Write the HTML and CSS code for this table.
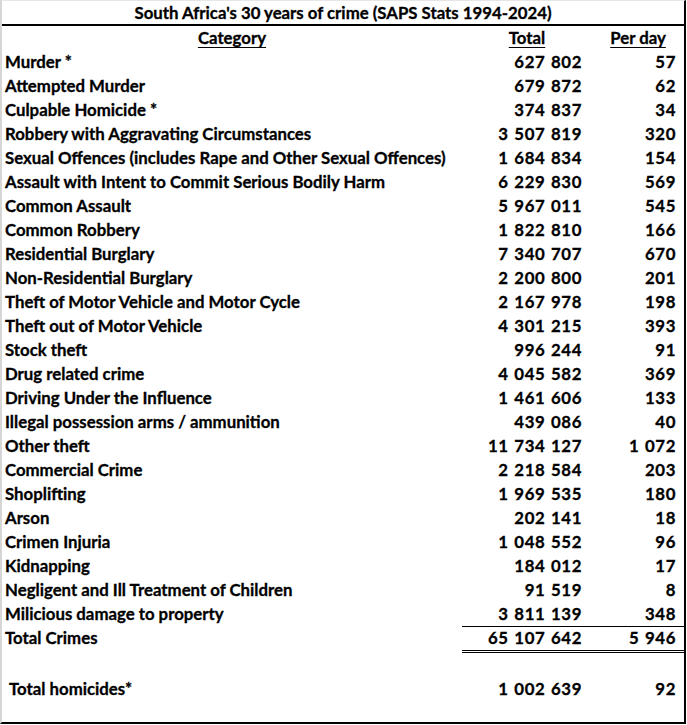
FILE: index.html
```html
<!DOCTYPE html>
<html>
<head>
<meta charset="utf-8">
<link rel="stylesheet" href="styles.css">
</head>
<body>
<div class="sheet">
  <div class="title">South Africa's 30 years of crime (SAPS Stats 1994-2024)</div>
  <div class="row head">
    <div class="cat"><u>Category</u></div>
    <div class="tot"><u>Total</u></div>
    <div class="pd"><u>Per day</u></div>
  </div>
  <div class="row"><div class="cat">Murder *</div><div class="tot">627 802</div><div class="pd">57</div></div>
  <div class="row"><div class="cat">Attempted Murder</div><div class="tot">679 872</div><div class="pd">62</div></div>
  <div class="row"><div class="cat">Culpable Homicide *</div><div class="tot">374 837</div><div class="pd">34</div></div>
  <div class="row"><div class="cat">Robbery with Aggravating Circumstances</div><div class="tot">3 507 819</div><div class="pd">320</div></div>
  <div class="row"><div class="cat">Sexual Offences (includes Rape and Other Sexual Offences)</div><div class="tot">1 684 834</div><div class="pd">154</div></div>
  <div class="row"><div class="cat">Assault with Intent to Commit Serious Bodily Harm</div><div class="tot">6 229 830</div><div class="pd">569</div></div>
  <div class="row"><div class="cat">Common Assault</div><div class="tot">5 967 011</div><div class="pd">545</div></div>
  <div class="row"><div class="cat">Common Robbery</div><div class="tot">1 822 810</div><div class="pd">166</div></div>
  <div class="row"><div class="cat">Residential Burglary</div><div class="tot">7 340 707</div><div class="pd">670</div></div>
  <div class="row"><div class="cat">Non-Residential Burglary</div><div class="tot">2 200 800</div><div class="pd">201</div></div>
  <div class="row"><div class="cat">Theft of Motor Vehicle and Motor Cycle</div><div class="tot">2 167 978</div><div class="pd">198</div></div>
  <div class="row"><div class="cat">Theft out of Motor Vehicle</div><div class="tot">4 301 215</div><div class="pd">393</div></div>
  <div class="row"><div class="cat">Stock theft</div><div class="tot">996 244</div><div class="pd">91</div></div>
  <div class="row"><div class="cat">Drug related crime</div><div class="tot">4 045 582</div><div class="pd">369</div></div>
  <div class="row"><div class="cat">Driving Under the Influence</div><div class="tot">1 461 606</div><div class="pd">133</div></div>
  <div class="row"><div class="cat">Illegal possession arms / ammunition</div><div class="tot">439 086</div><div class="pd">40</div></div>
  <div class="row"><div class="cat">Other theft</div><div class="tot">11 734 127</div><div class="pd">1 072</div></div>
  <div class="row"><div class="cat">Commercial Crime</div><div class="tot">2 218 584</div><div class="pd">203</div></div>
  <div class="row"><div class="cat">Shoplifting</div><div class="tot">1 969 535</div><div class="pd">180</div></div>
  <div class="row"><div class="cat">Arson</div><div class="tot">202 141</div><div class="pd">18</div></div>
  <div class="row"><div class="cat">Crimen Injuria</div><div class="tot">1 048 552</div><div class="pd">96</div></div>
  <div class="row"><div class="cat">Kidnapping</div><div class="tot">184 012</div><div class="pd">17</div></div>
  <div class="row"><div class="cat">Negligent and Ill Treatment of Children</div><div class="tot">91 519</div><div class="pd">8</div></div>
  <div class="row last"><div class="cat">Milicious damage to property</div><div class="tot">3 811 139</div><div class="pd">348</div></div>
  <div class="row total"><div class="cat">Total Crimes</div><div class="tot">65 107 642</div><div class="pd">5 946</div></div>
  <div class="row blank"></div>
  <div class="row"><div class="cat indent">Total homicides*</div><div class="tot">1 002 639</div><div class="pd">92</div></div>
</div>
</body>
</html>
```

FILE: styles.css
```css
* { box-sizing: border-box; }
html, body { margin: 0; padding: 0; background: #fff; }
body {
  font-family: "Lato", "Liberation Sans", sans-serif;
  font-weight: 700;
  font-size: 16.8px;
  color: #000;
  -webkit-text-stroke: 0.3px #000;
}
.sheet {
  width: 686px;
  height: 724px;
  border-left: 2px solid #d6d6d6;
  border-top: 1px solid #e6e6e6;
  border-right: 2px solid #000;
  border-bottom: 2px solid #000;
  display: flex;
  flex-direction: column;
}
.title {
  height: 25px;
  border-bottom: 2px solid #000;
  text-align: center;
  line-height: 23px;
}
.row {
  display: grid;
  grid-template-columns: 460px 130px 92px;
  height: 24px;
  line-height: 24px;
  flex: none;
}
.cat { padding-left: 3px; white-space: nowrap; }
.cat.indent { padding-left: 7px; }
.tot, .pd { letter-spacing: 0.6px; word-spacing: 1px; }
.tot { text-align: right; padding-right: 10px; }
.pd { text-align: right; padding-right: 8px; }
.head .cat, .head .tot, .head .pd { text-align: center; padding: 0; letter-spacing: 0; word-spacing: 0; }
u { text-decoration-thickness: 1px; text-underline-offset: 3px; }
.last .tot, .last .pd { border-bottom: 1px solid #000; }
.total { height: 27px; }
.total .tot, .total .pd { border-bottom: 3px double #000; }
.blank { height: 24px; }
```
